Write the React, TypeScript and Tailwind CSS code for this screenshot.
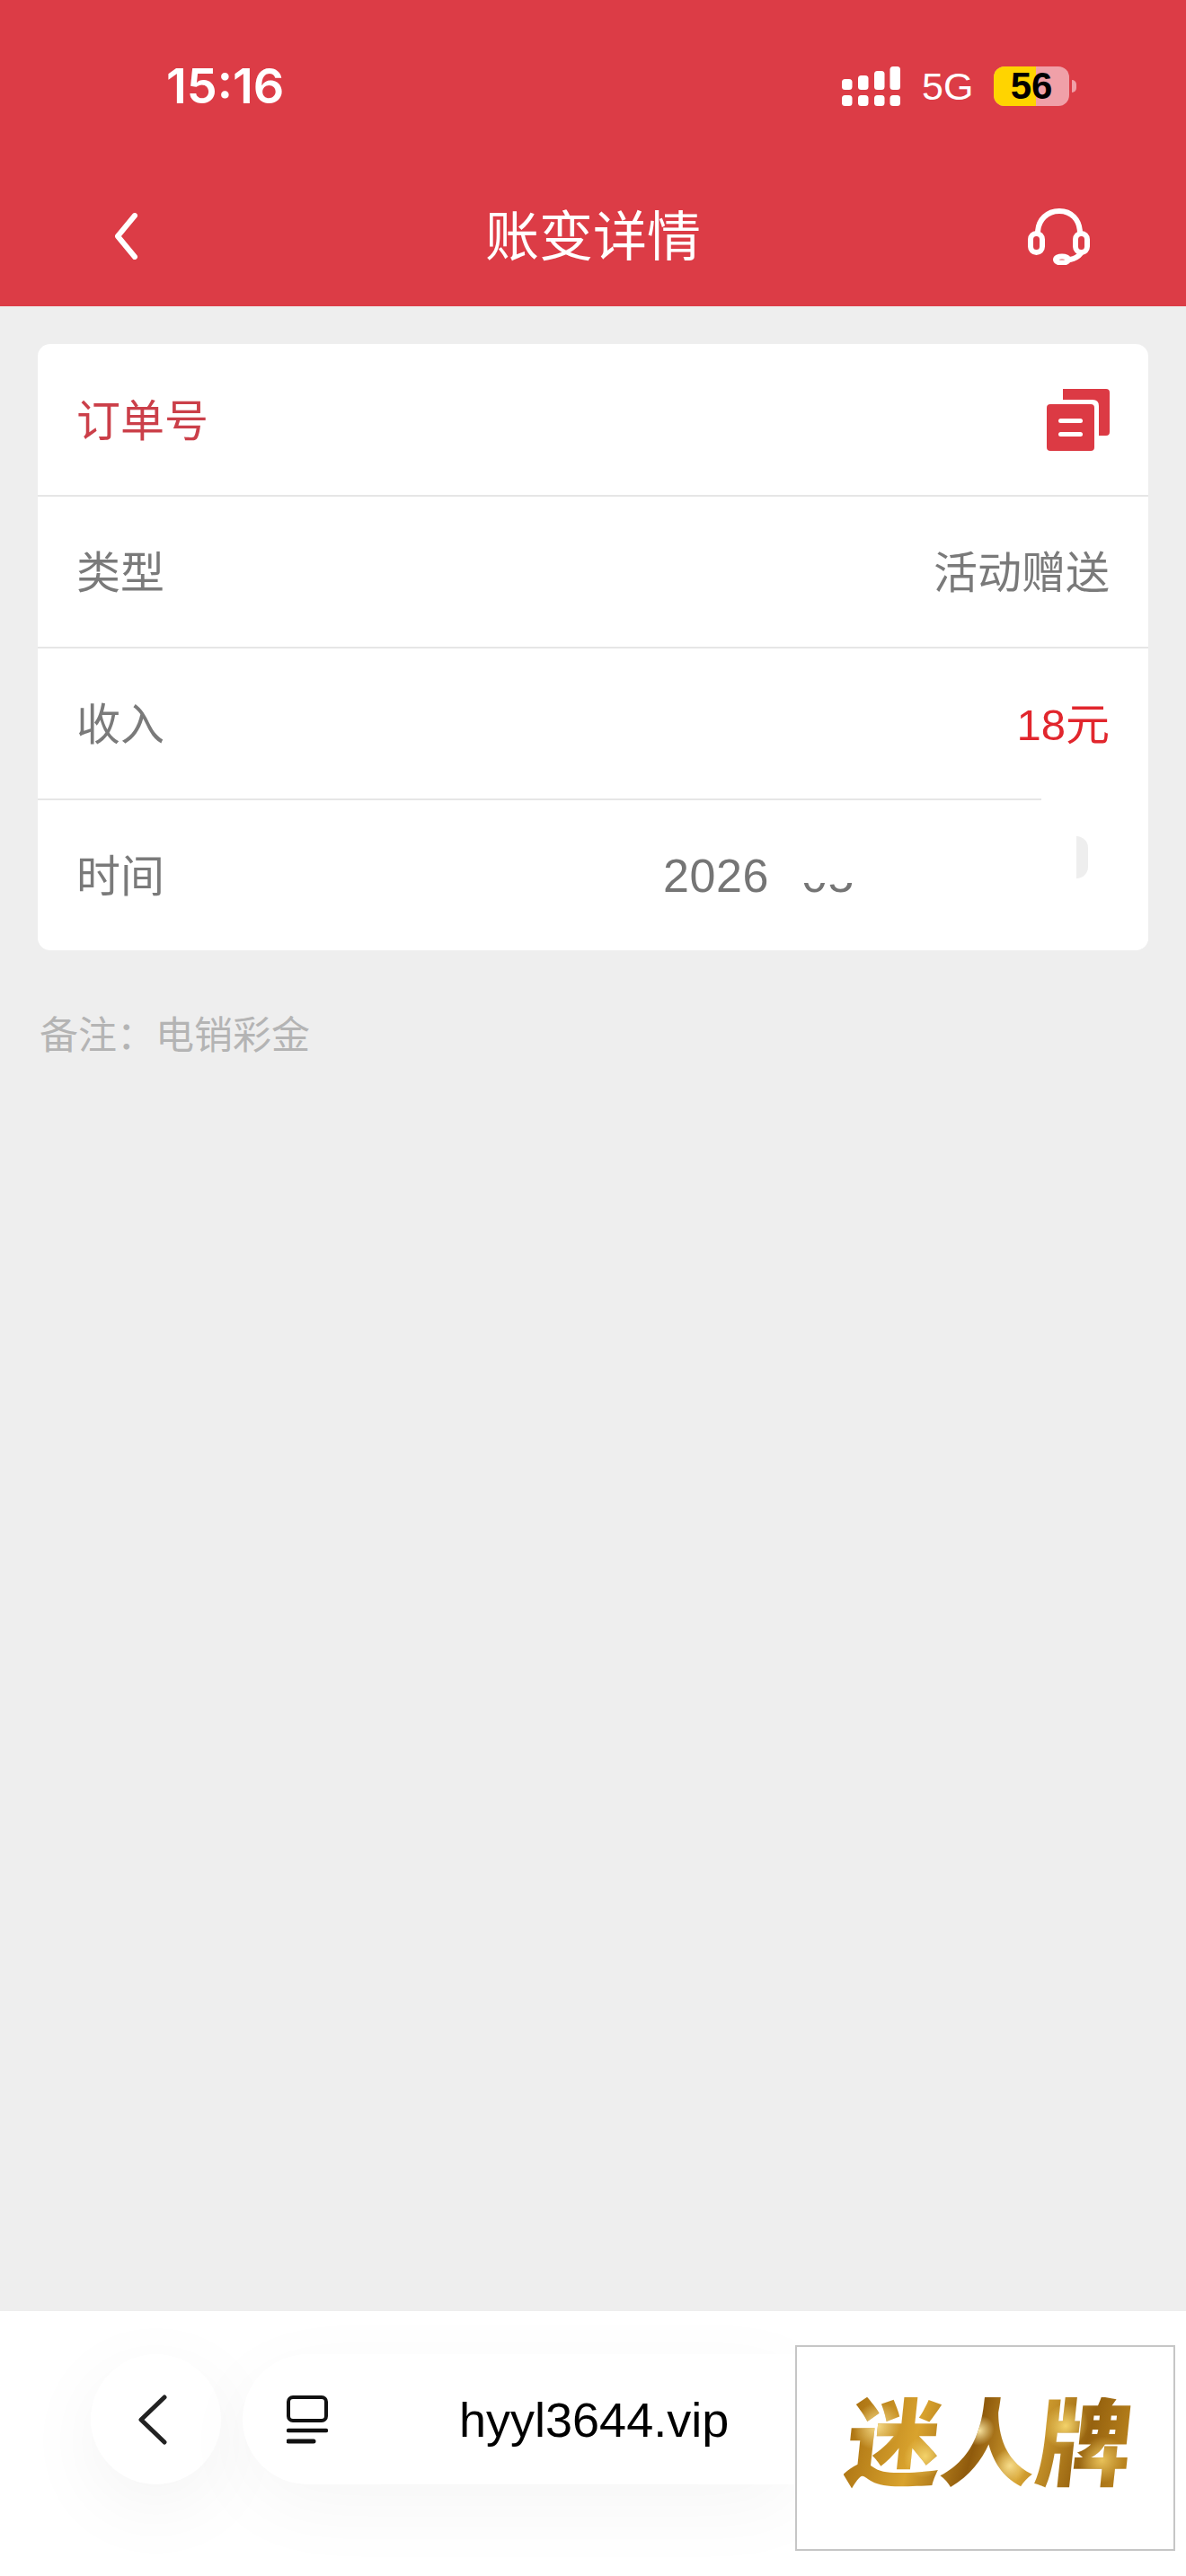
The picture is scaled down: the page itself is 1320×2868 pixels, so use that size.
import React from 'react';

function SignalIcon() {
  return (
    <svg width="65" height="44" viewBox="0 0 65 44" fill="#fff">
      <rect x="0" y="14" width="11.5" height="12" rx="3.5" />
      <rect x="18" y="10" width="11.5" height="16" rx="3.5" />
      <rect x="36" y="5" width="11.5" height="21" rx="3.5" />
      <rect x="53.5" y="0" width="11.5" height="26" rx="3.5" />
      <rect x="0" y="32" width="11.5" height="12" rx="3.5" />
      <rect x="18" y="32" width="11.5" height="12" rx="3.5" />
      <rect x="36" y="32" width="11.5" height="12" rx="3.5" />
      <rect x="53.5" y="32" width="11.5" height="12" rx="3.5" />
    </svg>
  );
}

function BackIcon() {
  return (
    <svg width="27" height="52" viewBox="0 0 27 52" fill="none" stroke="#fff" strokeWidth="6" strokeLinecap="round" strokeLinejoin="round">
      <path d="M23 3 L4 26 L23 49" />
    </svg>
  );
}

function HeadsetIcon() {
  return (
    <svg width="69" height="63" viewBox="0 0 69 63" fill="none" stroke="#fff" strokeWidth="6" strokeLinecap="round">
      <path d="M11 28 C11 12 22 3 35 3 C48 3 58 12 58 28" />
      <rect x="3" y="28" width="13" height="21" rx="6.5" />
      <rect x="53" y="28" width="13" height="21" rx="6.5" />
      <path d="M59 50 C56 54 52 56 47 57" />
      <ellipse cx="38" cy="57" rx="7" ry="3.6" />
    </svg>
  );
}

function CopyIcon() {
  return (
    <svg width="70" height="69" viewBox="0 0 70 69">
      <path d="M18 0 H66 Q70 0 70 4 V48 Q70 52 66 52 H58 V19 Q58 12 51 12 H18 Z" fill="#dc3a44" />
      <rect x="0" y="17" width="53" height="52" rx="4" fill="#dc3a44" />
      <rect x="13" y="33" width="27" height="5" rx="2.5" fill="#fff" />
      <rect x="13" y="48" width="27" height="5" rx="2.5" fill="#fff" />
    </svg>
  );
}

function PageIcon() {
  return (
    <svg width="46" height="54" viewBox="0 0 46 54" fill="none" stroke="#111">
      <rect x="2" y="2" width="42" height="26" rx="5" strokeWidth="4" />
      <path d="M2 39 H44" strokeWidth="4.5" strokeLinecap="round" />
      <path d="M2 51 H30" strokeWidth="5" strokeLinecap="round" />
    </svg>
  );
}

const rows = [
  { label: '类型', value: '活动赠送', valueClass: 'text-[#7a7a7a]' },
  { label: '收入', value: '18元', valueClass: 'text-[#e1262d]' },
];

export default function App() {
  return (
    <div className="w-[1320px] h-[2868px] flex flex-col overflow-hidden bg-[#eeeeee] font-['Liberation_Sans','Noto_Sans_CJK_SC',sans-serif]">
      <header className="h-[341px] shrink-0 bg-[#dc3c46] text-white">
        <div className="h-[74px]" />
        <div className="h-[44px] flex items-center pl-[185px]">
          <span className="text-[54px] leading-none font-semibold w-[752px] font-['Inter',sans-serif]">15:16</span>
          <SignalIcon />
          <span className="ml-[24px] text-[43px] leading-none w-[56px]">5G</span>
          <div className="ml-[24px] relative w-[84px] h-[44px] rounded-[12px] bg-[#f0a0a8] flex items-center justify-center">
            <div className="absolute left-0 top-0 bottom-0 w-[47px] rounded-l-[12px] bg-[#ffd400]" />
            <span className="relative text-[42px] leading-[44px] font-bold text-black">56</span>
          </div>
          <div className="ml-[3px] w-[5px] h-[14px] rounded-r-full bg-[#f0a0a8]" />
        </div>
        <div className="mt-[112px] h-[66px] flex items-center justify-between pl-[127px] pr-[107px]">
          <div className="w-[49px]">
            <BackIcon />
          </div>
          <h1 className="pt-[3px] text-[60px] leading-none font-normal">账变详情</h1>
          <HeadsetIcon />
        </div>
      </header>

      <main className="flex-1 px-[42px] pt-[42px]">
        <div className="bg-white rounded-[14px] overflow-hidden relative">
          <div className="h-[170px] border-b-2 border-[#e6e6e6] pl-[43px] pr-[43px] flex items-center justify-between">
            <span className="pt-[5px] text-[49px] text-[#cb3f49]">订单号</span>
            <CopyIcon />
          </div>
          {rows.map(r => (
            <div key={r.label} className="h-[169px] border-b-2 border-[#e6e6e6] px-[43px] flex items-center justify-between">
              <span className="pt-[5px] text-[49px] text-[#7a7a7a]">{r.label}</span>
              <span className={`pt-[5px] text-[49px] ${r.valueClass}`}>{r.value}</span>
            </div>
          ))}
          <div className="h-[167px] px-[43px] flex items-center justify-between relative">
            <span className="pt-[5px] text-[49px] text-[#7a7a7a]">时间</span>
            <span className="w-[497px] text-[52px] tracking-[0.6px] text-[#757575] whitespace-nowrap">
              2026<span className="mx-[9px]">-</span>05<span className="mx-[9px]">-</span>11
            </span>
            {/* the time has been wiped out by hand in the screenshot */}
            <div className="absolute left-[818px] top-[30px] w-[400px] h-[62px] bg-white" />
            <div className="absolute left-[930px] top-[85px] w-[70px] h-[17px] bg-white" />
            <div className="absolute left-[985px] top-0 w-[251px] h-[167px] bg-white" />
            <div className="absolute left-[1156px] top-[40px] w-[13px] h-[47px] bg-[#eeeeee] rounded-r-full" />
          </div>
          <div className="absolute left-[1117px] top-[506px] w-[119px] h-[4px] bg-white" />
        </div>
        <p className="mt-[65px] ml-[2px] text-[43px] leading-[60px] text-[#b4b4b4]">备注：电销彩金</p>
      </main>

      <footer className="h-[295px] shrink-0 bg-white flex items-start pt-[48px] pl-[101px] pr-[12px] overflow-hidden">
        <div className="w-[145px] h-[145px] rounded-full bg-white shadow-[0_24px_90px_rgba(0,0,0,0.05)] flex items-center justify-center pr-[8px]">
          <svg width="32" height="56" viewBox="0 0 32 56" fill="none" stroke="#222" strokeWidth="5" strokeLinecap="round" strokeLinejoin="round">
            <path d="M29 3 L3 28 L29 53" />
          </svg>
        </div>
        <div className="ml-[24px] flex-1 h-[145px] rounded-l-full bg-white shadow-[0_24px_90px_rgba(0,0,0,0.04)] flex items-center pl-[49px]">
          <PageIcon />
          <span className="ml-[146px] text-[54px] leading-none text-black">hyyl3644.vip</span>
        </div>
        <div className="-mt-[10px] w-[423px] h-[229px] border-2 border-[#c6c6c6] bg-white flex items-center justify-center">
          <span className="ml-[8px] -mt-[8px] text-[106px] leading-none font-black -skew-x-6 whitespace-nowrap text-transparent bg-clip-text bg-[radial-gradient(circle_at_10%_30%,#f6dc8a_0,transparent_9%),radial-gradient(circle_at_28%_62%,#f3d26a_0,transparent_10%),radial-gradient(circle_at_46%_35%,#f8e4a0_0,transparent_9%),radial-gradient(circle_at_58%_72%,#f6dc8a_0,transparent_10%),radial-gradient(circle_at_76%_30%,#f3d26a_0,transparent_10%),radial-gradient(circle_at_90%_66%,#e9c25a_0,transparent_9%),linear-gradient(100deg,#a86f10,#d9a32e_25%,#8f5a0c_45%,#d8a534_62%,#96620f_82%,#c18a20)]">
            迷人牌
          </span>
        </div>
      </footer>
    </div>
  );
}
